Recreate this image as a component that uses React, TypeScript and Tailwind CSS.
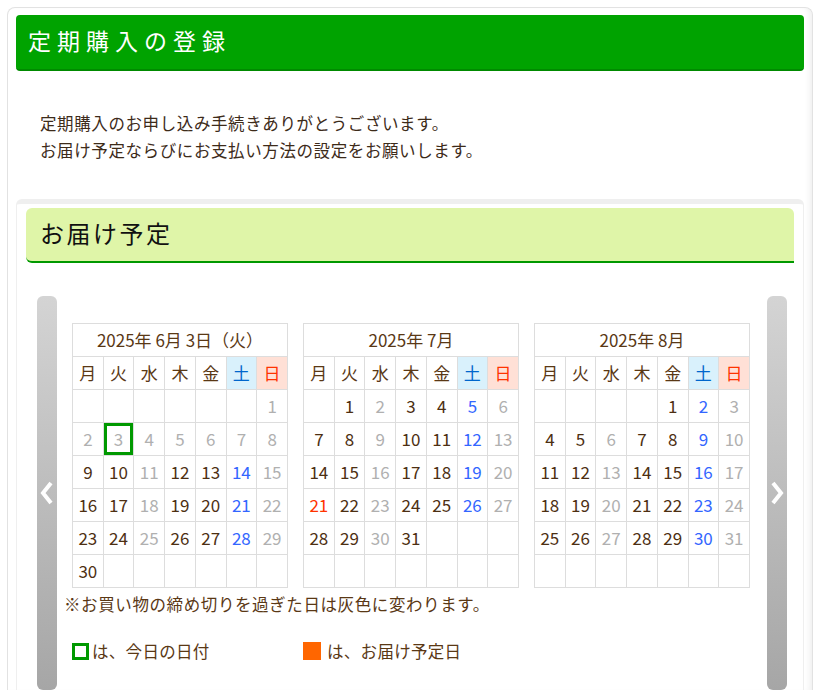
import type { ReactNode } from 'react'

type Cell = { d: number; c: 'n' | 'g' | 'b' | 'r' } | null

const wd = ['月', '火', '水', '木', '金', '土', '日']

function buildMonth(days: number, offset: number, rule: (d: number, dow: number) => 'n' | 'g' | 'b' | 'r'): Cell[][] {
  const cells: Cell[] = []
  for (let i = 0; i < offset; i++) cells.push(null)
  for (let d = 1; d <= days; d++) {
    const dow = (offset + d - 1) % 7
    cells.push({ d, c: rule(d, dow) })
  }
  while (cells.length < 42) cells.push(null)
  const rows: Cell[][] = []
  for (let i = 0; i < 6; i++) rows.push(cells.slice(i * 7, i * 7 + 7))
  return rows
}

const base = (d: number, dow: number) => {
  if (dow === 2 || dow === 6) return 'g' as const
  if (dow === 5) return 'b' as const
  return 'n' as const
}

const june = buildMonth(30, 6, (d, dow) => (d <= 8 ? 'g' : base(d, dow)))
const july = buildMonth(31, 1, (d, dow) => (d === 21 ? 'r' : base(d, dow)))
const aug = buildMonth(31, 4, base)

const colorCls = {
  n: 'text-[#4d2f12]',
  g: 'text-[#b0b0b0]',
  b: 'text-[#3366ff]',
  r: 'text-[#ff3300]',
}

function Calendar({ title, rows, today }: { title: string; rows: Cell[][]; today?: number }) {
  return (
    <table className="w-[216px] table-fixed border-collapse bg-white">
      <thead>
        <tr>
          <th colSpan={7} className="h-[33px] border border-[#dddddd] p-0 text-[17px] font-normal text-[#5a3815]">
            {title}
          </th>
        </tr>
        <tr>
          {wd.map((w, i) => (
            <th
              key={w}
              className={`h-[33px] border border-[#dddddd] p-0 text-[17px] font-normal ${
                i === 5
                  ? 'bg-[#d9f1fc] text-[#0066cc]'
                  : i === 6
                  ? 'bg-[#ffe0d6] text-[#ff3300]'
                  : 'text-[#5a3815]'
              }`}
            >
              {w}
            </th>
          ))}
        </tr>
      </thead>
      <tbody>
        {rows.map((r, ri) => (
          <tr key={ri}>
            {r.map((c, ci) => (
              <td key={ci} className="h-[33px] border border-[#dddddd] p-0 text-center">
                {c && (
                  <div
                    className={`flex h-[32px] items-center justify-center text-[17px] ${colorCls[c.c]} ${
                      c.d === today ? 'shadow-[inset_0_0_0_3px_#009900]' : ''
                    }`}
                  >
                    {c.d}
                  </div>
                )}
              </td>
            ))}
          </tr>
        ))}
      </tbody>
    </table>
  )
}

function ArrowBar({ children }: { children: ReactNode }) {
  return (
    <div className="flex w-5 shrink-0 items-center justify-center rounded-[6px] bg-gradient-to-b from-[#d4d4d4] to-[#a6a6a6]">
      {children}
    </div>
  )
}

export default function App() {
  return (
    <div
      className="min-h-screen bg-white px-[7px] pt-[7px]"
      style={{ fontFamily: '"Noto Sans CJK JP", "Noto Sans", sans-serif' }}
    >
      <div className="rounded-t-[8px] border border-b-0 border-[#e2e2e2] px-2 pt-[7px] shadow-[inset_-6px_0_6px_-4px_#eeeeee]">
        <div className="flex h-[56px] items-center rounded-[4px] border-b-2 border-[#008a00] bg-[#00a300] px-3 pb-[3px]">
          <h1 className="text-[23px] tracking-[6px] text-white">定期購入の登録</h1>
        </div>

        <div className="px-6 pt-[39px] pb-[35px] text-[16.5px] leading-[27px] tracking-[0.6px] text-[#3d2b1a]">
          <p>定期購入のお申し込み手続きありがとうございます。</p>
          <p>お届け予定ならびにお支払い方法の設定をお願いします。</p>
        </div>

        <div className="rounded-t-[6px] border-x border-t-[5px] border-[#efefef] px-[9px] pt-[4px]">
          <div className="flex h-[55px] items-center rounded-t-[6px] rounded-bl-[6px] border-b-2 border-[#009900] bg-[#dff5a8] px-[14px] pb-[4px]">
            <h2 className="text-[24px] tracking-[2.5px] text-[#111111]">お届け予定</h2>
          </div>

          <div className="mt-[33px] flex h-[394px] gap-[15px] pl-[11px] pr-[10px]">
            <ArrowBar>
              <svg width="16" height="26" viewBox="0 0 16 26">
                <polyline points="12,3 4,13 12,23" fill="none" stroke="#ffffff" strokeWidth="4" strokeLinejoin="miter" />
              </svg>
            </ArrowBar>

            <div className="flex w-[678px] flex-col pt-[27px]">
              <div className="flex gap-[15px]">
                <Calendar title="2025年 6月 3日（火）" rows={june} today={3} />
                <Calendar title="2025年 7月" rows={july} />
                <Calendar title="2025年 8月" rows={aug} />
              </div>
              <p className="-ml-[8px] mt-[4px] text-[16.5px] leading-[24px] tracking-[0.6px] text-[#5a3815]">
                ※お買い物の締め切りを過ぎた日は灰色に変わります。
              </p>
              <div className="mt-[23px] flex items-center text-[16.5px] tracking-[0.3px] text-[#5a3815]">
                <div className="flex w-[231px] items-center">
                  <span className="mr-[3px] h-[17px] w-[17px] border-[3px] border-[#009900]" />
                  <span>は、今日の日付</span>
                </div>
                <div className="flex items-center">
                  <span className="mr-[6px] h-[18px] w-[18px] bg-[#ff6600]" />
                  <span>は、お届け予定日</span>
                </div>
              </div>
            </div>

            <div className="ml-[2px] flex">
              <ArrowBar>
                <svg width="16" height="26" viewBox="0 0 16 26">
                  <polyline points="4,3 12,13 4,23" fill="none" stroke="#ffffff" strokeWidth="4" strokeLinejoin="miter" />
                </svg>
              </ArrowBar>
            </div>
          </div>
        </div>
      </div>
    </div>
  )
}
